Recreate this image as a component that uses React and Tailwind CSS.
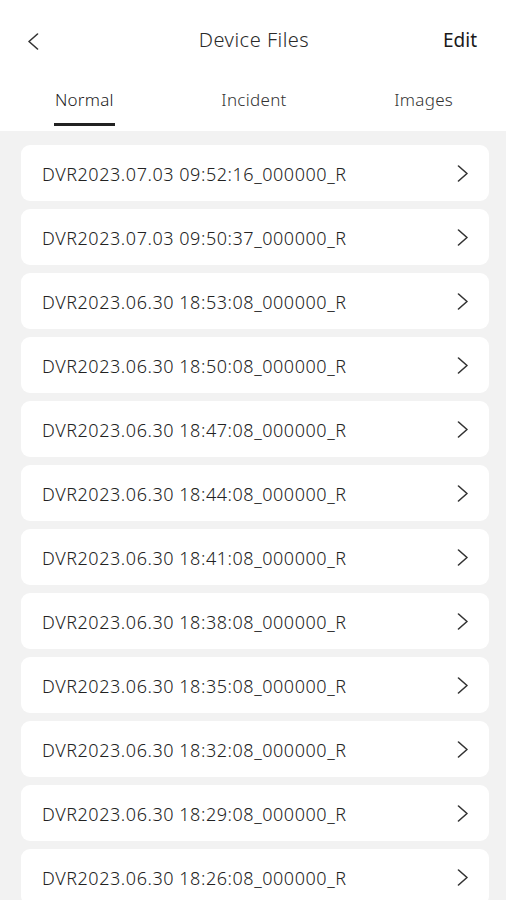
import React from "react";

const files = [
  "DVR2023.07.03 09:52:16_000000_R",
  "DVR2023.07.03 09:50:37_000000_R",
  "DVR2023.06.30 18:53:08_000000_R",
  "DVR2023.06.30 18:50:08_000000_R",
  "DVR2023.06.30 18:47:08_000000_R",
  "DVR2023.06.30 18:44:08_000000_R",
  "DVR2023.06.30 18:41:08_000000_R",
  "DVR2023.06.30 18:38:08_000000_R",
  "DVR2023.06.30 18:35:08_000000_R",
  "DVR2023.06.30 18:32:08_000000_R",
  "DVR2023.06.30 18:29:08_000000_R",
  "DVR2023.06.30 18:26:08_000000_R",
];

function Chevron({ left }) {
  return (
    <svg width="12" height="18" viewBox="0 0 12 18" fill="none">
      <path
        d={left ? "M10.5 1 L2 8.5 L10.5 16" : "M1.5 1 L10 8.5 L1.5 16"}
        stroke="#333"
        strokeWidth="1.6"
        strokeLinecap="round"
        strokeLinejoin="round"
      />
    </svg>
  );
}

export default function App() {
  return (
    <div
      className="w-[506px] h-[900px] overflow-hidden bg-[#f2f2f2] flex flex-col"
      style={{ fontFamily: '"Noto Sans", "Open Sans", sans-serif' }}
    >
      <div className="bg-white flex flex-col">
        <div className="h-[80px] flex items-center pl-[27px] pr-[29px] pt-[3px]">
          <Chevron left />
          <div className="flex-1 text-center text-[20px] tracking-[0.5px] text-[#2a2a2a] font-[350] pl-[26px] pb-[3px]">Device Files</div>
          <div className="text-[19px] text-[#1a1a1a] font-[380] pb-[3px]">Edit</div>
        </div>
        <div className="h-[51px] grid grid-cols-3 text-[17px] font-[350]">
          <div className="flex justify-center">
            <div className="flex flex-col items-center">
              <span className="text-[#222] leading-[40px] tracking-[0.2px]">Normal</span>
              <span className="h-[3px] w-[61px] bg-[#222] mt-[3px]" />
            </div>
          </div>
          <div className="flex justify-center">
            <span className="text-[#333] leading-[40px] tracking-[0.3px] pl-[2px]">Incident</span>
          </div>
          <div className="flex justify-center">
            <span className="text-[#333] leading-[40px] tracking-[0.3px] pl-[4px]">Images</span>
          </div>
        </div>
      </div>
      <div className="flex flex-col gap-[8px] pl-[21px] pr-[17px] pt-[14px]">
        {files.map((f) => (
          <div
            key={f}
            className="h-[56px] shrink-0 bg-white rounded-[9px] flex items-center justify-between pl-[21px] pr-[20px]"
          >
            <span className="text-[18px] tracking-[0.55px] text-[#222] font-[350] pt-[3px]">{f}</span>
            <span className="pt-[2px]"><Chevron /></span>
          </div>
        ))}
      </div>
    </div>
  );
}
